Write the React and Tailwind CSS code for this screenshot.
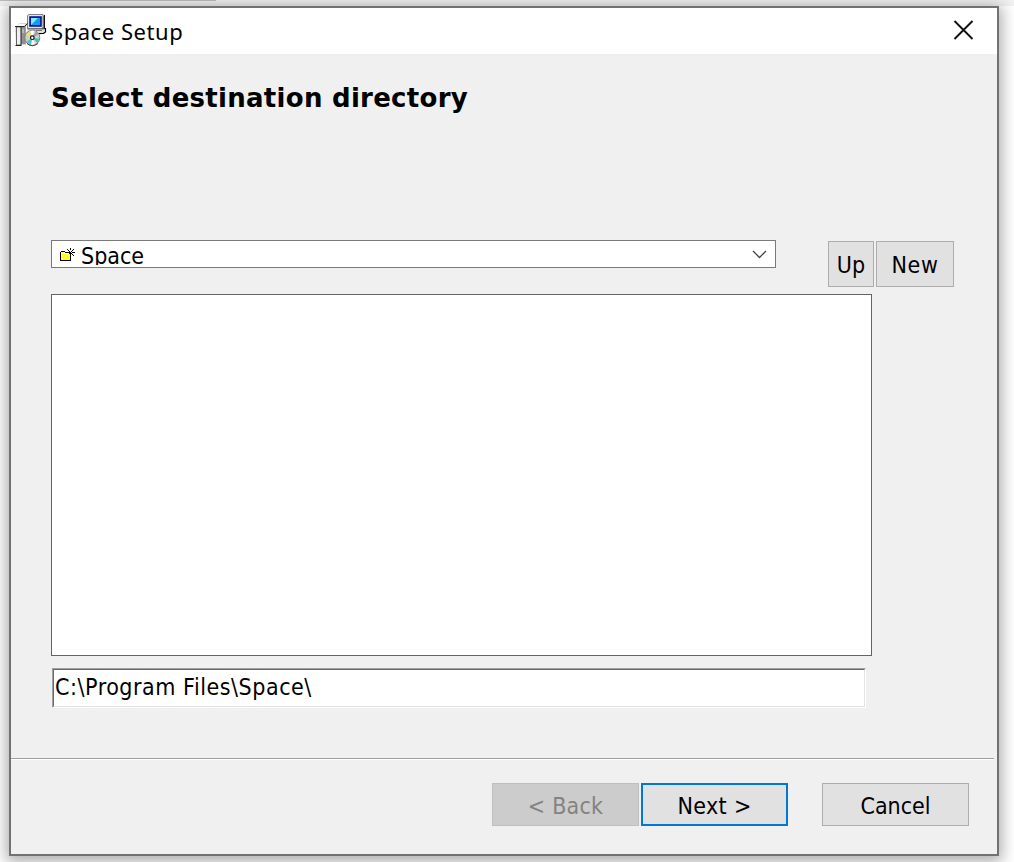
function InstallerIcon() {
  return (
    <svg width="32" height="33" viewBox="0 0 32 33" className="block">
      {/* monitor */}
      <path d="M12 2l2-2h14.500l1.500 1v13l-2 2H12z" fill="#d4d4d4" />
      <path d="M12.500 15V1.500l1.500-1h14" fill="none" stroke="#808080" />
      <path d="M28 1.500v13M29.500 1v14H13" fill="none" stroke="#111" strokeWidth="1" />
      <path d="M13.500 1.500h14v12h-14z" fill="#f4f4f4" />
      <path d="M15 3h11v9H15z" fill="#109cf0" stroke="#000090" strokeWidth="1.500" />
      <path d="M16 4h7l-7 7z" fill="#80ecff" />
      {/* base */}
      <path d="M12.500 15.500h17v3l-2 2h-7l-4-2h-4z" fill="#e0e0e0" />
      <path d="M30.500 14v4l-2 1.500h-6l-2-1H12" fill="none" stroke="#000" strokeWidth="1.200" />
      <path d="M21 16.500h6" stroke="#777" />
      {/* box */}
      <path d="M0.500 12.500l4-3h7.500l-1 3v18h-5v1h-5z" fill="#b0b0b0" />
      <path d="M1 12l3-2h7l-2 2z" fill="#fafafa" />
      <path d="M1.500 13v18" stroke="#666" />
      <path d="M2 14h4v16H2z" fill="#f0f0f0" />
      <path d="M6 13h4.500v17H6z" fill="#909090" />
      <path d="M0 12.500h9.500l3-3M0.500 31.500h6M6 13v18" stroke="#222" fill="none" />
      <path d="M7 16h2M7 18h2M3 16h2" stroke="#ddd" />
      {/* disc */}
      <circle cx="17.300" cy="23.700" r="7.500" fill="#cfcfcf" stroke="#808080" />
      <path d="M17.300 23.700l-6.500-2.500 3.500-4z" fill="#ece25a" />
      <path d="M17.300 23.700l-2-7h4z" fill="#fff" />
      <path d="M17.300 23.700l3.500-6 2.500 2.500z" fill="#9c9c9c" />
      <path d="M17.300 23.700l7 1-2 4z" fill="#30c8c0" />
      <path d="M17.300 23.700l3 6.500-4 .8z" fill="#fff" />
      <path d="M17.300 23.700l-1.500 7-4-3z" fill="#38ccd0" />
      <circle cx="17.300" cy="23.700" r="1.800" fill="#fff" stroke="#111" strokeWidth="1.200" />
      <path d="M12 29.500q5 4.500 11 0" stroke="#444" fill="none" />
    </svg>
  );
}

function FolderIcon() {
  return (
    <svg width="16" height="15" viewBox="0 0 16 15" shapeRendering="crispEdges" className="block">
      <path d="M0 4h1V3h4v1h6v9H0z" fill="#000" />
      <path d="M1 4h4v1H1z" fill="#ffffa0" />
      <path d="M1 6h9v6H1z" fill="#ffff38" />
      <path d="M1 5h8v1H1z" fill="#fff" />
      <path d="M10 0h1v2h-1zM7 1h1v1H7zM8 2h1v1H8zM13 1h1v1h-1zM12 2h1v1h-1zM9 3h1v1H9zM11 3h1v1h-1zM12 4h3v1h-3zM11 5h1v1h-1zM12 6h1v1h-1zM13 7h1v1h-1z" fill="#000" />
    </svg>
  );
}

const ui = "font-['DejaVu_Sans_Condensed','DejaVu_Sans',sans-serif] [font-stretch:condensed] text-[23px] leading-[28px] whitespace-pre";

function Button({ className, children, textClass = "" }) {
  return (
    <button className={`flex items-center justify-center border pt-[2px] ${className}`}>
      <span className={`${ui} ${textClass}`}>{children}</span>
    </button>
  );
}

export default function App() {
  return (
    <div className="h-[862px] w-[1014px] overflow-hidden bg-white">
      <div className="h-[6px] bg-[#f2f2f2]">
        <div className="h-px w-[216px] bg-[#bdbdbd]" />
      </div>
      <div className="ml-[9px] flex h-[850px] w-[990px] flex-col border-2 border-[#727272] bg-[#f0f0f0] shadow-[0_3px_14px_3px_rgba(0,0,0,0.32)]">
        <header className="flex h-[46px] shrink-0 items-start bg-white pl-[4px]">
          <div className="pt-[6px]"><InstallerIcon /></div>
          <h1 className="ml-[4px] pt-[7px] font-['Noto_Sans',sans-serif] text-[22px] leading-[32px] tracking-[0.55px]">Space Setup</h1>
          <button className="mt-[12px] mr-[23px] ml-auto" aria-label="Close">
            <svg width="21" height="20" viewBox="0 0 21 20" className="block">
              <path d="M1.500 1l18 18M19.500 1l-18 18" stroke="#111" strokeWidth="1.900" />
            </svg>
          </button>
        </header>
        <main className="flex h-[704px] shrink-0 flex-col pl-[40px]">
          <h2 className="mt-[27px] h-[34px] font-['DejaVu_Sans',sans-serif] text-[26px] leading-[34px] font-bold tracking-[0.28px] whitespace-nowrap">Select destination directory</h2>
          <div className="mt-[125px] flex h-[47px] items-start">
            <div className="flex h-[28px] w-[725px] items-start border border-[#7a7a7a] bg-white pl-[8px]">
              <div className="pt-[7px]"><FolderIcon /></div>
              <div className="ml-[5px] h-[24px] overflow-hidden pt-px"><span className={`${ui} block`}>Space</span></div>
              <svg width="15" height="9" viewBox="0 0 15 9" className="mt-[9px] mr-[8px] ml-auto">
                <path d="M1 1l6.500 6.500L14 1" fill="none" stroke="#444" strokeWidth="1.300" />
              </svg>
            </div>
            <Button className="mt-px ml-[52px] h-[46px] w-[46px] border-[#adadad] bg-[#e1e1e1]">Up</Button>
            <Button className="mt-px ml-[2px] h-[46px] w-[78px] border-[#adadad] bg-[#e1e1e1]" textClass="tracking-[0.6px]">New</Button>
          </div>
          <div className="mt-[7px] h-[362px] w-[821px] shrink-0 border border-[#646464] bg-white" />
          <div className="mt-[12px] ml-px h-[40px] w-[814px] border border-t-[#a0a0a0] border-r-white border-b-white border-l-[#a0a0a0]">
            <div className="h-[38px] border border-t-[#696969] border-r-[#e3e3e3] border-b-[#e3e3e3] border-l-[#696969] bg-white pl-px pt-[3px]">
              <span className={`${ui} block tracking-[0.54px]`}>C:\Program Files\Space\</span>
            </div>
          </div>
        </main>
        <footer className="mr-[3px] flex h-[96px] items-start border-t border-[#a0a0a0] pl-[481px] shadow-[inset_0_1px_0_white]">
          <Button className="mt-[24px] h-[43px] w-[147px] border-[#bfbfbf] bg-[#cccccc] text-[#838383]" textClass="tracking-[0.2px]">{"< Back"}</Button>
          <Button className="mt-[24px] ml-[2px] h-[43px] w-[147px] border-2 border-[#0078d7] bg-[#e1e1e1]" textClass="tracking-[0.35px]">{"Next >"}</Button>
          <Button className="mt-[24px] ml-[34px] h-[43px] w-[147px] border-[#adadad] bg-[#e1e1e1]">Cancel</Button>
        </footer>
      </div>
    </div>
  );
}
